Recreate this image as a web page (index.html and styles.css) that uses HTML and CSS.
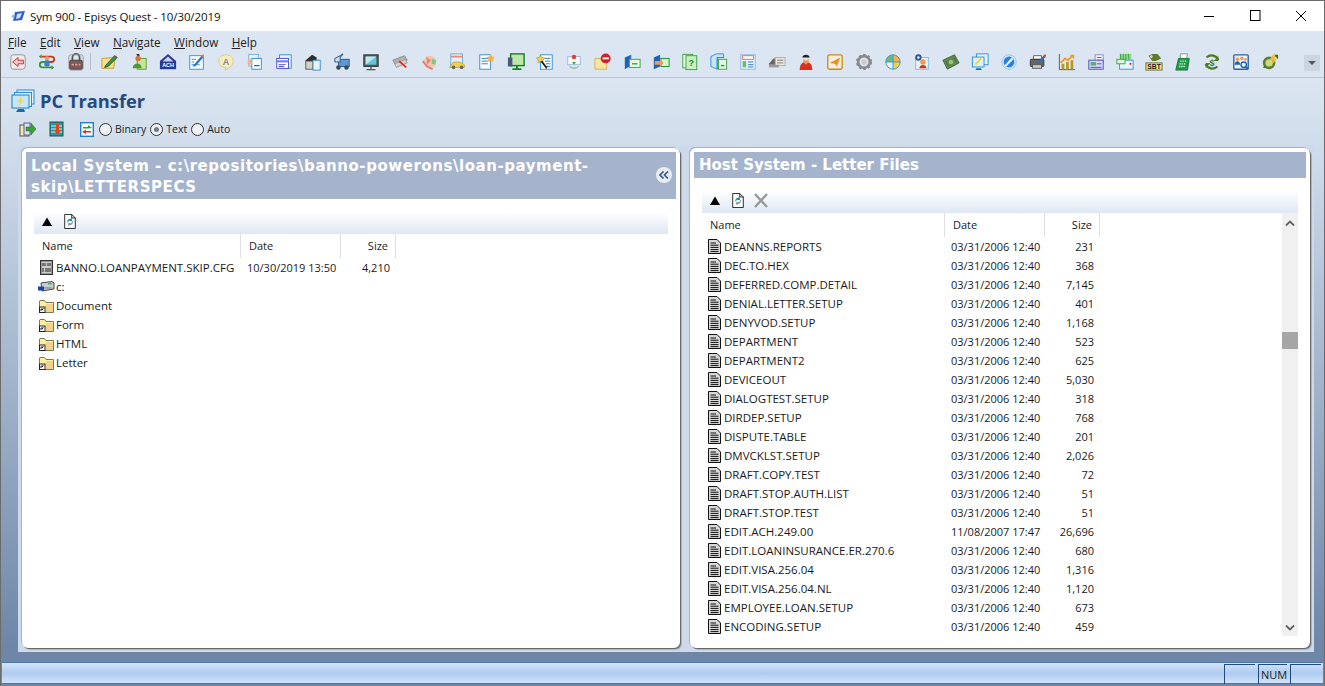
FILE: index.html
```html
<!DOCTYPE html>
<html lang="en">
<head>
<meta charset="utf-8">
<title>Sym 900 - Episys Quest - 10/30/2019</title>
<link rel="stylesheet" href="styles.css">
</head>
<body>
<svg class="defs" width="0" height="0" aria-hidden="true">
  <symbol id="doc" viewBox="0 0 13 15"><path d="M.5.5H9L12.5 4V14.5H.5Z" fill="#d8d8d8" stroke="#111"/><path d="M2.5 4H8M2.5 6.2H10.5M2.5 8.4H10.5M2.5 10.6H10.5M2.5 12.6H10.5" stroke="#111"/></symbol>
  <symbol id="cfg" viewBox="0 0 13 15"><rect x=".5" y=".5" width="12" height="14" fill="#999" stroke="#333"/><rect x="2" y="2" width="9" height="11" fill="#ccc"/><path d="M3 3v3M5 3v3M8 3v3M10 3v3M3 8v4M6 8v4M8 8v4M10 8v4" stroke="#222"/></symbol>
  <symbol id="folder" viewBox="0 0 15 15"><path d="M.5 3V14.5H14.5V4.5H7L5.5 2.5H1Z" fill="#fbf0a0" stroke="#7a7a52"/><rect x="7" y="6" width="7" height="8" fill="#f2d28e"/><rect x=".5" y="9" width="5.5" height="5.5" fill="#fff" stroke="#222"/><path d="M2 13V11H4M3 12L4.5 10.5" stroke="#222" fill="none"/></symbol>
  <symbol id="drive" viewBox="0 0 17 13"><path d="M3 3L14 1.500L16 3V9L4 11Z" fill="#c8ced4" stroke="#444"/><rect x="10" y="3" width="4" height="1.500" fill="#2fc04a"/><rect x="0" y="6.500" width="6" height="4" fill="#1844a8"/><path d="M6 8H14" stroke="#777"/></symbol>
  <symbol id="up" viewBox="0 0 12 10"><path d="M6 .5L11 9H1Z" fill="#000"/></symbol>
  <symbol id="refresh" viewBox="0 0 13 17"><path d="M.5.500H8.500L12.500 4.500V16.500H.5Z" fill="#fff" stroke="#111"/><path d="M8.500.500V4.500H12.500" fill="none" stroke="#111"/><path d="M4 9.500A3 3 0 0 1 8.500 6.500M8 4.800V7.300H5.800" fill="none" stroke="#0e8f92" stroke-width="1.300"/><path d="M9 8A3 3 0 0 1 4.500 11.500M5 13.300V10.800H7.200" fill="none" stroke="#8a9a9c" stroke-width="1.300"/></symbol>
  <symbol id="mon" viewBox="0 0 24 24"><rect x="6" y="1" width="17" height="14" fill="#dff0fb" stroke="#2a8bd0"/><rect x="3.500" y="3.500" width="17" height="14" fill="#e6f4fc" stroke="#2a8bd0"/><rect x="1" y="6" width="17" height="13" fill="#c7e8fa" stroke="#1a7cc4"/><path d="M11 7L6 13H9L7 18L13 11.500H10Z" fill="#f2d54a"/><path d="M7 20H13L14 23H5Z" fill="#0f6fb8"/></symbol>
</svg>
<div class="window">
  <header class="titlebar">
    <svg class="app-icon" width="16" height="12" viewBox="0 0 16 12"><path d="M4 2L14 1L11 10L2 11Z" fill="#2f5fc4"/><path d="M6 4L11 3L9 8L5 9Z" fill="#cfe0fa"/><path d="M0 6L4 4L3 9Z" fill="#9db8e8"/></svg>
    <span class="title-text">Sym 900 - Episys Quest - 10/30/2019</span>
    <div class="winctl">
      <span class="winbtn"><svg width="12" height="12" viewBox="0 0 12 12"><path d="M1 6.500H11" stroke="#000"/></svg></span>
      <span class="winbtn"><svg width="12" height="12" viewBox="0 0 12 12"><rect x="1.500" y=".5" width="9.500" height="10" fill="none" stroke="#000"/></svg></span>
      <span class="winbtn"><svg width="12" height="12" viewBox="0 0 12 12"><path d="M1 1L11 11M11 1L1 11" stroke="#000"/></svg></span>
    </div>
  </header>
  <nav class="menubar">
    <span class="menu"><u>F</u>ile</span>
    <span class="menu"><u>E</u>dit</span>
    <span class="menu"><u>V</u>iew</span>
    <span class="menu"><u>N</u>avigate</span>
    <span class="menu"><u>W</u>indow</span>
    <span class="menu"><u>H</u>elp</span>
  </nav>
  <div class="toolbar">
    <span class="tb"><svg viewBox="0 0 20 20"><rect x="2" y="2" width="16" height="16" rx="3" fill="#f1ecec" stroke="#8d8d8d"/><path d="M4 10L10 5V8H16V12H10V15Z" fill="#f4c6c6" stroke="#d3232e"/></svg></span>
    <span class="tb"><svg viewBox="0 0 20 20"><path d="M4 4H15A3 3 0 0 1 15 10H10" fill="none" stroke="#c53a1e" stroke-width="2"/><path d="M16 16H5A3 3 0 0 1 5 10H9" fill="none" stroke="#2f9b3a" stroke-width="2"/><circle cx="10" cy="6" r="2.500" fill="#e8a056"/><rect x="7" y="8" width="6" height="7" rx="2" fill="#3f7fc4"/><path d="M4 1.500L1 4L4 6.500ZM15 13.500L18 16L15 18.500Z" fill="#2f9b3a"/></svg></span>
    <span class="tb"><svg viewBox="0 0 20 20"><path d="M6 9V5A4 4 0 0 1 14 5V9" fill="none" stroke="#555" stroke-width="2"/><rect x="2" y="2" width="16" height="17" rx="2.500" fill="none" stroke="#9a9a9a"/><rect x="3" y="8" width="14" height="10" rx="1.500" fill="#7d5a55" stroke="#444"/><path d="M5 13H15" stroke="#ef9a9a" stroke-width="2" stroke-dasharray="2.500 1.500"/></svg></span>
    <span class="tb-sep"></span>
    <span class="tb"><svg viewBox="0 0 20 20"><path d="M1 6L16 5L14 17H1Z" fill="#f6e08c" stroke="#c79a2e"/><path d="M5 14L15 3L18 5L8 15L4 16Z" fill="#3f8f4a" stroke="#2b5f33"/><path d="M15 3L18 5" stroke="#c22"/></svg></span>
    <span class="tb"><svg viewBox="0 0 20 20"><rect x="8" y="6" width="10" height="12" fill="#c6e59a" stroke="#5a9a2e"/><circle cx="9" cy="6" r="3" fill="#c9783a"/><path d="M8 3L11 3L10 1H7Z" fill="#222"/><path d="M3 17C3 10 13 10 13 17Z" fill="#4f9a35"/></svg></span>
    <span class="tb"><svg viewBox="0 0 20 20"><path d="M10 1L19 9V18H1V9Z" fill="#2b3a8f"/><path d="M10 4L16 9.500H4Z" fill="#c7d2f5"/><text x="10" y="16" class="svgt" font-size="6" fill="#fff" text-anchor="middle">ACH</text></svg></span>
    <span class="tb"><svg viewBox="0 0 20 20"><rect x="2" y="3" width="15" height="15" fill="#fff" stroke="#2a8bd0"/><path d="M4 7H9M4 10H7M4 13H13" stroke="#2a8bd0"/><path d="M5 15L15 3L17 5L8 15Z" fill="#2a78c8"/><path d="M15 3L17 1L18 5L17 5Z" fill="#ef7a30"/></svg></span>
    <span class="tb"><svg viewBox="0 0 20 20"><path d="M10 2C15 2 18 5 18 9C18 14 13 17 9 19L10 16C5 16 2 13 2 9C2 5 5 2 10 2Z" fill="#f6eec2" stroke="#e0c872"/><text x="10" y="13" class="svgt" font-size="10" fill="#888" text-anchor="middle">A</text></svg></span>
    <span class="tb"><svg viewBox="0 0 20 20"><rect x="3" y="1.500" width="11" height="13" fill="#e8f3fc" stroke="#6fb0e8"/><rect x="6.500" y="6" width="10.500" height="12" fill="#fff" stroke="#2a8bd0"/><path d="M9 14H15" stroke="#1a6fb8" stroke-width="1.500"/><rect x="2" y="7" width="4" height="6" fill="#f1b488"/></svg></span>
    <span class="tb"><svg viewBox="0 0 20 20"><rect x="5" y="2" width="13" height="15" fill="#eaf3fc" stroke="#2a8bd0"/><rect x="2" y="6" width="13" height="11" fill="#fff" stroke="#3f46b8"/><rect x="2" y="8" width="13" height="2.500" fill="#7f86d8"/><path d="M4 13H12M4 15H10" stroke="#3f46b8"/></svg></span>
    <span class="tb"><svg viewBox="0 0 20 20"><path d="M1 9L9 2L14 5V9Z" fill="#2e2e2e"/><rect x="2" y="9" width="8" height="9" fill="#d8d2c2" stroke="#555"/><rect x="10" y="8" width="8" height="11" fill="#e6f4fc" stroke="#2a8bd0"/></svg></span>
    <span class="tb"><svg viewBox="0 0 20 20"><rect x="6" y="7" width="12" height="8" fill="#5a9ad8" stroke="#2c4f7c"/><path d="M2 6L8 3V10H2Z" fill="#c8dcf2" stroke="#2c4f7c"/><circle cx="6" cy="16" r="2.500" fill="#3a4a5a"/><circle cx="15" cy="16" r="2.500" fill="#3a4a5a"/><path d="M8 4L11 1" stroke="#2a6fb8" stroke-width="2"/></svg></span>
    <span class="tb"><svg viewBox="0 0 20 20"><rect x="2" y="2" width="16" height="13" fill="#555" stroke="#333"/><rect x="4" y="4" width="12" height="9" fill="#5fc8d8"/><path d="M4 4H16L4 13Z" fill="#bdeaf2"/><path d="M10 15V18M5 18.500H15" stroke="#555" stroke-width="1.500"/></svg></span>
    <span class="tb"><svg viewBox="0 0 20 20"><path d="M2 8L15 3L18 8L5 13Z" fill="#b8b0ac" stroke="#888"/><path d="M4 12L16 7L18 11L6 16Z" fill="#d8d0cc" stroke="#999"/><path d="M9 9L17 16" stroke="#e02a1e" stroke-width="2"/></svg></span>
    <span class="tb"><svg viewBox="0 0 20 20"><circle cx="11" cy="10" r="7" fill="#f0c8b0"/><path d="M7 4L12 8L8 13Z" fill="#e88a6a"/><path d="M13 6L18 8L17 13L13 12Z" fill="#7fc88a"/><path d="M3 9L8 15L14 18" fill="none" stroke="#e07a7a" stroke-width="2"/></svg></span>
    <span class="tb"><svg viewBox="0 0 20 20"><rect x="2" y="1" width="13" height="12" fill="#e6f0fa" stroke="#5fa8e0"/><rect x="2" y="3" width="13" height="2" fill="#e88a6a"/><path d="M1 15L5 10H12L17 13V16H1Z" fill="#f2d14a" stroke="#c9a52a"/><circle cx="5" cy="16" r="2" fill="#666"/><circle cx="14" cy="16" r="2" fill="#666"/></svg></span>
    <span class="tb"><svg viewBox="0 0 20 20"><rect x="2" y="2" width="12" height="16" fill="#fff" stroke="#2a8bd0"/><path d="M4 6H11M4 9H11M4 12H11" stroke="#2a6fb8"/><path d="M14 1L15.500 4L18.500 4.500L16.500 7L17 10L14 8.500L11 10L11.500 7L9.500 4.500L12.500 4Z" fill="#f2b050"/></svg></span>
    <span class="tb"><svg viewBox="0 0 20 20"><rect x="4" y="1" width="15" height="13" fill="#bfe8a8" stroke="#0e7a1e" stroke-width="1.500"/><rect x="1" y="5" width="5" height="10" fill="#4a5a7a"/><path d="M11 14V17M6 18H16" stroke="#0a8a1a" stroke-width="2"/></svg></span>
    <span class="tb"><svg viewBox="0 0 20 20"><rect x="5" y="2" width="13" height="16" fill="#fff" stroke="#2a8bd0"/><path d="M10 6H16M10 9H16M11 12H16M11 15H16" stroke="#2a6fb8"/><path d="M5 2L6.500 5L10 5.500L7.500 8L8 11L5 9.500L2 11L2.500 8L.5 5.500L3.500 5Z" fill="#f2d14a" stroke="#777" stroke-width=".5"/><path d="M6 9L12 17" stroke="#222" stroke-width="2"/></svg></span>
    <span class="tb"><svg viewBox="0 0 20 20"><rect x="3" y="4" width="14" height="9" fill="#f5f7fa" stroke="#9db8d8"/><circle cx="10" cy="4.500" r="2.500" fill="#e0413a"/><path d="M8 10H12L10 13Z" fill="#2f9b3a"/><path d="M5 15A6 4 0 0 0 15 15" fill="none" stroke="#5cb85c"/></svg></span>
    <span class="tb"><svg viewBox="0 0 20 20"><path d="M1 6H14V18H1Z" fill="#f8e6a0" stroke="#d0ae52"/><circle cx="13" cy="6" r="5.500" fill="#d81e2a"/><rect x="9.500" y="5" width="7" height="2" fill="#fff"/></svg></span>
    <span class="tb"><svg viewBox="0 0 20 20"><path d="M2 5L9 2V14L2 18Z" fill="#1f62b8"/><rect x="7" y="7" width="12" height="9" fill="#eaf8ea" stroke="#2fa23a"/><path d="M10 12H16" stroke="#2fa23a" stroke-width="1.500"/><path d="M9 2V7" stroke="#7ab0e8"/></svg></span>
    <span class="tb"><svg viewBox="0 0 20 20"><path d="M2 5L9 2V15L2 18Z" fill="#1f62b8"/><rect x="10" y="6" width="9" height="9" fill="#d8f4d8" stroke="#0e8a1e"/><path d="M3 9H9V7L13 11L9 15V13H3Z" fill="#ef9a50"/></svg></span>
    <span class="tb"><svg viewBox="0 0 20 20"><rect x="2" y="1.500" width="11" height="15" fill="#eaf8ea" stroke="#2fa23a"/><rect x="5.500" y="3" width="12" height="15.500" fill="#c8f0c0" stroke="#2fa23a"/><text x="11.500" y="14" class="svgt" font-size="10" fill="#2a8a2a" text-anchor="middle">?</text></svg></span>
    <span class="tb"><svg viewBox="0 0 20 20"><path d="M1 4L7 1H15V5H8V18L1 15Z" fill="#c8e4fa" stroke="#2a8bd0"/><path d="M8 5L15 5L8 5V18" fill="none" stroke="#2a8bd0"/><rect x="9.500" y="7" width="9" height="11" fill="#eaf8ea" stroke="#2fa23a"/><path d="M12 14H16" stroke="#2a8a2a" stroke-width="1.500"/></svg></span>
    <span class="tb"><svg viewBox="0 0 20 20"><rect x="2" y="2" width="16" height="16" fill="#eaf4fc" stroke="#7ab8e8"/><rect x="4" y="3" width="12" height="4" fill="#fff" stroke="#e0685a"/><rect x="4" y="9" width="4" height="7" fill="#6ac06a"/><path d="M10 10H16M10 13H16M10 15.500H16" stroke="#2a6fb8"/></svg></span>
    <span class="tb"><svg viewBox="0 0 20 20"><path d="M1 12L6 6H10V13H1Z" fill="#666"/><rect x="8" y="5" width="11" height="9" fill="#eee8d8" stroke="#aaa"/><path d="M10 8H17M10 11H17" stroke="#777"/><rect x="1" y="13" width="11" height="3" fill="#999"/></svg></span>
    <span class="tb"><svg viewBox="0 0 20 20"><path d="M3 19C3 12 6 10 10 10C14 10 17 12 17 19Z" fill="#d8321e"/><path d="M7 6A3.500 5 0 0 0 13 6V10L10 13L7 10Z" fill="#ef9a50"/><path d="M6 5C6 1 14 1 14 5Z" fill="#222"/></svg></span>
    <span class="tb"><svg viewBox="0 0 20 20"><rect x="2" y="2" width="16" height="16" rx="2" fill="#f8eede" stroke="#c88a1e" stroke-width="1.500"/><path d="M4 11L16 5L12 15L10 12Z" fill="#e0961e"/></svg></span>
    <span class="tb"><svg viewBox="0 0 20 20"><circle cx="10" cy="10" r="6.500" fill="none" stroke="#8a8a8a" stroke-width="3"/><circle cx="10" cy="10" r="7.500" fill="none" stroke="#8a8a8a" stroke-width="3" stroke-dasharray="2.500 2.400"/><circle cx="10" cy="10" r="3" fill="#ccc"/></svg></span>
    <span class="tb"><svg viewBox="0 0 20 20"><circle cx="10" cy="10" r="8" fill="#f2d14a"/><path d="M2 10A8 8 0 0 1 10 2V10Z" fill="#6ac06a"/><path d="M10 2A8 8 0 0 1 18 10H10Z" fill="#f2b050"/><path d="M2 10A8 8 0 0 0 10 18V10Z" fill="#e4f1fb"/><circle cx="10" cy="10" r="8" fill="none" stroke="#3a8ed8"/><path d="M10 2V18M2 10H18" stroke="#3a8ed8"/></svg></span>
    <span class="tb"><svg viewBox="0 0 20 20"><rect x="3" y="5" width="14" height="13" fill="#eaf4fc" stroke="#7ab8e8"/><circle cx="11" cy="10" r="3" fill="#ef9a50"/><path d="M7 17C7 12 15 12 15 17Z" fill="#d8321e"/><circle cx="6" cy="5" r="3.500" fill="#36528f"/><circle cx="6" cy="5" r="1.300" fill="#fff"/></svg></span>
    <span class="tb"><svg viewBox="0 0 20 20"><path d="M1 8L14 2L19 11L6 18Z" fill="#5f8a4a" stroke="#3e6a36"/><circle cx="10" cy="10" r="2.500" fill="#9cc08a"/><path d="M4 9L7 14M13 5L16 10" stroke="#3e6a36"/></svg></span>
    <span class="tb"><svg viewBox="0 0 20 20"><rect x="6" y="1" width="13" height="12" fill="#eaf4fc" stroke="#2a8bd0"/><rect x="1.500" y="4.500" width="13" height="11" fill="#dbf0fb" stroke="#2a8bd0"/><path d="M5 13L11 6" stroke="#f2d14a" stroke-width="2"/><path d="M6 17H11L12 19H5Z" fill="#0f6fb8"/></svg></span>
    <span class="tb"><svg viewBox="0 0 20 20"><circle cx="10" cy="10" r="8" fill="#d8ecfc" stroke="#8ac0ea"/><circle cx="10" cy="10" r="6" fill="#2a7fe0"/><path d="M5 14L13 5L15 7L7 15Z" fill="#eaf4fc"/></svg></span>
    <span class="tb"><svg viewBox="0 0 20 20"><path d="M5 3H14V7H5Z" fill="#fff" stroke="#555"/><rect x="1.500" y="7" width="15" height="8" rx="1" fill="#666" stroke="#333"/><rect x="4" y="13" width="10" height="4" fill="#ccc" stroke="#555"/><path d="M9 11L16 3L18 5L11 12Z" fill="#2a6fb8"/><path d="M16 3L18 1L19 3L18 5Z" fill="#d8321e"/></svg></span>
    <span class="tb"><svg viewBox="0 0 20 20"><path d="M1.500 1V18.500H19" fill="none" stroke="#555"/><rect x="4" y="12" width="3" height="6" fill="#b89a1e"/><rect x="9" y="10" width="3" height="8" fill="#b89a1e"/><rect x="14" y="8" width="3" height="10" fill="#b89a1e"/><path d="M3 11L8 6L11 8L16 3" fill="none" stroke="#ef9a20" stroke-width="2"/><path d="M13 2H18V7Z" fill="#ef9a20"/></svg></span>
    <span class="tb"><svg viewBox="0 0 20 20"><rect x="9" y="2" width="9" height="9" fill="#f0f0fa" stroke="#8888cc"/><path d="M11 5H16M11 8H16" stroke="#5656a8"/><rect x="2" y="8" width="16" height="10" fill="#d8d8fa" stroke="#4a4ab8"/><rect x="4" y="10" width="6" height="4" fill="#5ab45a"/><path d="M11 12H16M4 16H16" stroke="#4a4ab8"/></svg></span>
    <span class="tb"><svg viewBox="0 0 20 20"><rect x="4" y="1" width="13" height="7" fill="#8fd88f"/><path d="M5 1V7M8 1V7M11 1V7M14 1V7" stroke="#3aa03a"/><rect x="4" y="8" width="15" height="10" fill="#eaf4fc" stroke="#3a8ed8"/><rect x="1" y="7" width="9" height="5" fill="#e0f5e0" stroke="#2fa23a"/><rect x="15" y="11" width="2" height="2" fill="#e0211e"/></svg></span>
    <span class="tb"><svg viewBox="0 0 20 20"><path d="M4 3L8 1H14L18 6L12 9H8Z" fill="#5f7a2e"/><circle cx="7" cy="4" r="1.500" fill="#f0e8a0"/><rect x="1" y="11" width="18" height="8" fill="#f2e07a" stroke="#6a6a2a"/><text x="10" y="18" class="svgt" font-size="7.500" fill="#222" text-anchor="middle">SBT</text></svg></span>
    <span class="tb"><svg viewBox="0 0 20 20"><path d="M7 1H15L14 7H7Z" fill="#fff" stroke="#888"/><path d="M5 6H17L15 19H2Z" fill="#1e9a4a" stroke="#127a36"/><path d="M7 9H14M6 12H13M5.500 15H12.500" stroke="#d8f4d8" stroke-width="1.500" stroke-dasharray="1.500 1"/></svg></span>
    <span class="tb"><svg viewBox="0 0 20 20"><path d="M4 5A8 8 0 0 1 17 8M16 15A8 8 0 0 1 3 12" fill="none" stroke="#4f7a2a" stroke-width="2.500"/><path d="M17 3V9H12ZM3 17V11H8Z" fill="#4f7a2a"/><text x="10" y="14" class="svgt" font-size="10" fill="#4f7a2a" text-anchor="middle">$</text></svg></span>
    <span class="tb"><svg viewBox="0 0 20 20"><rect x="2" y="2" width="16" height="16" rx="1" fill="#eaf4fc" stroke="#2a5fa8" stroke-width="1.500"/><circle cx="6" cy="7" r="2" fill="#ef9a50"/><circle cx="11" cy="6" r="2" fill="#ef9a50"/><circle cx="15" cy="7" r="1.500" fill="#ef9a50"/><path d="M3 13C3 8 9 8 9 13Z" fill="#1f62b8"/><circle cx="13" cy="13" r="3" fill="none" stroke="#1f62b8" stroke-width="1.500"/><path d="M15 15L18 18" stroke="#1f62b8" stroke-width="2"/></svg></span>
    <span class="tb"><svg viewBox="0 0 20 20"><circle cx="9" cy="11" r="7" fill="#5f7f2e"/><circle cx="9" cy="11" r="4" fill="#cfd88a"/><path d="M2 16L4 14L6 17ZM14 2H19V7Z" fill="#2f7a2a"/><path d="M12 3L16 1L15 6L18 6L12 13L13 8H10Z" fill="#f2c02e"/></svg></span>
    <span class="tb-more"><svg width="8" height="4" viewBox="0 0 8 4"><path d="M0 0H8L4 4Z" fill="#555"/></svg></span>
  </div>
  <main class="content">
    <div class="page-head">
      <svg class="page-icon" width="24" height="24"><use href="#mon"/></svg>
      <h1 class="page-title">PC Transfer</h1>
    </div>
    <div class="page-tools">
      <svg class="tool tool-a" width="17" height="16" viewBox="0 0 17 16"><rect x="1" y="4" width="9" height="11" fill="#f5e6b0" stroke="#555"/><rect x="5" y="2" width="6" height="12" fill="#dfe2f5" stroke="#5a5a9a"/><path d="M7 6H12V2L17 8L12 14V10H7Z" fill="#3aa03a" stroke="#1f6f1f" stroke-width=".5"/></svg>
      <svg class="tool tool-b" width="16" height="16" viewBox="0 0 16 16"><rect x="1" y="1" width="13" height="14" fill="#2a9a9a" stroke="#1a4f5f"/><path d="M2 5H13M2 8H13M2 11H13" stroke="#cfeaea"/><path d="M7 3H10V9H12L8.500 14L5 9H7Z" fill="#e0451e"/></svg>
      <svg class="tool tool-c" width="14" height="15" viewBox="0 0 14 15"><rect x=".7" y=".7" width="12.600" height="13.600" fill="#fff" stroke="#1f7fd8" stroke-width="1.400"/><path d="M3 5H8V3L12 6L8 6.500H3Z" fill="#2f9b3a"/><path d="M11 9H6V7.500L2 10L6 12V10.500H11Z" fill="#d8321e"/></svg>
      <label class="radio"><span class="dot"></span>Binary</label>
      <label class="radio"><span class="dot on"></span>Text</label>
      <label class="radio"><span class="dot"></span>Auto</label>
    </div>
    <div class="stage">
      <section class="panel panel-local">
        <div class="panel-head head-local">Local System - c:\repositories\banno-powerons\loan-payment-skip\LETTERSPECS
          <span class="collapse"><svg width="10" height="8" viewBox="0 0 10 8"><path d="M4.500 .5L1 4L4.500 7.500M9 .5L5.500 4L9 7.500" fill="none" stroke="#3d5a8a" stroke-width="1.700"/></svg></span>
        </div>
        <div class="list-wrap wrap-local">
          <div class="subbar">
            <svg class="sb-up" width="12" height="10"><use href="#up"/></svg>
            <svg class="sb-ref" width="12" height="15"><use href="#refresh"/></svg>
          </div>
          <div class="row head cols-local"><span class="h-name">Name</span><span class="h-date">Date</span><span class="h-size">Size</span></div>
          <div class="row item cols-local"><span class="name"><svg class="ic" width="13" height="15"><use href="#cfg"/></svg>BANNO.LOANPAYMENT.SKIP.CFG</span><span class="date">10/30/2019 13:50</span><span class="size">4,210</span></div>
          <div class="row item cols-local"><span class="name"><svg class="ic ic-drive" width="17" height="13"><use href="#drive"/></svg>c:</span></div>
          <div class="row item cols-local"><span class="name"><svg class="ic ic-f" width="15" height="15"><use href="#folder"/></svg>Document</span></div>
          <div class="row item cols-local"><span class="name"><svg class="ic ic-f" width="15" height="15"><use href="#folder"/></svg>Form</span></div>
          <div class="row item cols-local"><span class="name"><svg class="ic ic-f" width="15" height="15"><use href="#folder"/></svg>HTML</span></div>
          <div class="row item cols-local"><span class="name"><svg class="ic ic-f" width="15" height="15"><use href="#folder"/></svg>Letter</span></div>
        </div>
      </section>
      <section class="panel panel-host">
        <div class="panel-head head-host">Host System - Letter Files</div>
        <div class="list-wrap wrap-host">
          <div class="subbar">
            <svg class="sb-up" width="12" height="10"><use href="#up"/></svg>
            <svg class="sb-ref" width="12" height="15"><use href="#refresh"/></svg>
            <svg class="sb-x" width="16" height="15" viewBox="0 0 16 15"><path d="M2 1L14 14M14 1L2 14" stroke="#999" stroke-width="2.400"/></svg>
          </div>
          <div class="host-body">
            <div class="host-list">
              <div class="row head head-h cols-host"><span class="h-name">Name</span><span class="h-date">Date</span><span class="h-size">Size</span></div>
              <div class="row item cols-host"><span class="name"><svg class="ic" width="13" height="15"><use href="#doc"/></svg>DEANNS.REPORTS</span><span class="date">03/31/2006 12:40</span><span class="size">231</span></div>
              <div class="row item cols-host"><span class="name"><svg class="ic" width="13" height="15"><use href="#doc"/></svg>DEC.TO.HEX</span><span class="date">03/31/2006 12:40</span><span class="size">368</span></div>
              <div class="row item cols-host"><span class="name"><svg class="ic" width="13" height="15"><use href="#doc"/></svg>DEFERRED.COMP.DETAIL</span><span class="date">03/31/2006 12:40</span><span class="size">7,145</span></div>
              <div class="row item cols-host"><span class="name"><svg class="ic" width="13" height="15"><use href="#doc"/></svg>DENIAL.LETTER.SETUP</span><span class="date">03/31/2006 12:40</span><span class="size">401</span></div>
              <div class="row item cols-host"><span class="name"><svg class="ic" width="13" height="15"><use href="#doc"/></svg>DENYVOD.SETUP</span><span class="date">03/31/2006 12:40</span><span class="size">1,168</span></div>
              <div class="row item cols-host"><span class="name"><svg class="ic" width="13" height="15"><use href="#doc"/></svg>DEPARTMENT</span><span class="date">03/31/2006 12:40</span><span class="size">523</span></div>
              <div class="row item cols-host"><span class="name"><svg class="ic" width="13" height="15"><use href="#doc"/></svg>DEPARTMENT2</span><span class="date">03/31/2006 12:40</span><span class="size">625</span></div>
              <div class="row item cols-host"><span class="name"><svg class="ic" width="13" height="15"><use href="#doc"/></svg>DEVICEOUT</span><span class="date">03/31/2006 12:40</span><span class="size">5,030</span></div>
              <div class="row item cols-host"><span class="name"><svg class="ic" width="13" height="15"><use href="#doc"/></svg>DIALOGTEST.SETUP</span><span class="date">03/31/2006 12:40</span><span class="size">318</span></div>
              <div class="row item cols-host"><span class="name"><svg class="ic" width="13" height="15"><use href="#doc"/></svg>DIRDEP.SETUP</span><span class="date">03/31/2006 12:40</span><span class="size">768</span></div>
              <div class="row item cols-host"><span class="name"><svg class="ic" width="13" height="15"><use href="#doc"/></svg>DISPUTE.TABLE</span><span class="date">03/31/2006 12:40</span><span class="size">201</span></div>
              <div class="row item cols-host"><span class="name"><svg class="ic" width="13" height="15"><use href="#doc"/></svg>DMVCKLST.SETUP</span><span class="date">03/31/2006 12:40</span><span class="size">2,026</span></div>
              <div class="row item cols-host"><span class="name"><svg class="ic" width="13" height="15"><use href="#doc"/></svg>DRAFT.COPY.TEST</span><span class="date">03/31/2006 12:40</span><span class="size">72</span></div>
              <div class="row item cols-host"><span class="name"><svg class="ic" width="13" height="15"><use href="#doc"/></svg>DRAFT.STOP.AUTH.LIST</span><span class="date">03/31/2006 12:40</span><span class="size">51</span></div>
              <div class="row item cols-host"><span class="name"><svg class="ic" width="13" height="15"><use href="#doc"/></svg>DRAFT.STOP.TEST</span><span class="date">03/31/2006 12:40</span><span class="size">51</span></div>
              <div class="row item cols-host"><span class="name"><svg class="ic" width="13" height="15"><use href="#doc"/></svg>EDIT.ACH.249.00</span><span class="date">11/08/2007 17:47</span><span class="size">26,696</span></div>
              <div class="row item cols-host"><span class="name"><svg class="ic" width="13" height="15"><use href="#doc"/></svg>EDIT.LOANINSURANCE.ER.270.6</span><span class="date">03/31/2006 12:40</span><span class="size">680</span></div>
              <div class="row item cols-host"><span class="name"><svg class="ic" width="13" height="15"><use href="#doc"/></svg>EDIT.VISA.256.04</span><span class="date">03/31/2006 12:40</span><span class="size">1,316</span></div>
              <div class="row item cols-host"><span class="name"><svg class="ic" width="13" height="15"><use href="#doc"/></svg>EDIT.VISA.256.04.NL</span><span class="date">03/31/2006 12:40</span><span class="size">1,120</span></div>
              <div class="row item cols-host"><span class="name"><svg class="ic" width="13" height="15"><use href="#doc"/></svg>EMPLOYEE.LOAN.SETUP</span><span class="date">03/31/2006 12:40</span><span class="size">673</span></div>
              <div class="row item cols-host"><span class="name"><svg class="ic" width="13" height="15"><use href="#doc"/></svg>ENCODING.SETUP</span><span class="date">03/31/2006 12:40</span><span class="size">459</span></div>
            </div>
            <div class="vscroll">
              <svg class="chev" width="10" height="6" viewBox="0 0 10 6"><path d="M1 5.500L5 1.500L9 5.500" fill="none" stroke="#606060" stroke-width="1.800"/></svg>
              <div class="thumb"></div>
              <svg class="chev" width="10" height="6" viewBox="0 0 10 6"><path d="M1 .5L5 4.500L9 .5" fill="none" stroke="#606060" stroke-width="1.800"/></svg>
            </div>
          </div>
        </div>
      </section>
    </div>
  </main>
  <footer class="statusbar">
    <span class="pane pane-a"></span>
    <span class="pane pane-b">NUM</span>
    <span class="pane pane-c"></span>
  </footer>
</div>
</body>
</html>
```
FILE: styles.css
```css
* { box-sizing: border-box; }
html, body { margin: 0; padding: 0; height: 100%; overflow: hidden; }
body { font-family: "Open Sans", "Noto Sans", sans-serif; font-size: 11px; color: #1a1a1a; background: #6e87a8; }
.defs { position: absolute; }
.svgt { font-family: "Liberation Sans", sans-serif; font-weight: 700; }

.window { width: 1325px; height: 686px; display: flex; flex-direction: column; border: 1px solid #6b6b6b; border-width: 1px 1px 0 1px; }

.titlebar { height: 30px; flex: none; background: #fff; display: flex; align-items: center; padding-left: 10px; }
.app-icon { flex: none; }
.title-text { font-size: 11.5px; letter-spacing: -0.1px; margin-left: 3px; color: #111; }
.winctl { margin-left: auto; display: flex; height: 100%; }
.winbtn { width: 46px; display: flex; align-items: center; justify-content: center; }

.menubar { height: 21px; flex: none; background: #dce6f2; display: flex; align-items: center; padding-left: 7px; gap: 13.4px; font-size: 11.7px; color: #222; }
.menu u { text-underline-offset: 1px; }

.toolbar { height: 26px; flex: none; background: #dce6f2; display: flex; align-items: center; padding: 0 0 6px 2px; border-bottom: 1px solid #b6c9d8; position: relative; }
.tb { flex: none; width: 29px; height: 18px; display: flex; justify-content: center; }
.tb svg { width: 18px; height: 18px; display: block; }
.tb-sep { flex: none; width: 5px; height: 17px; background: linear-gradient(#b5bfc9, #b5bfc9) no-repeat 0 0 / 1px 100%; }
.tb-more { flex: none; width: 16px; height: 16px; margin: 3px 4px 0 auto; background: #c9d5e3; display: flex; align-items: center; justify-content: center; }

.content { flex: 1; min-height: 0; display: flex; flex-direction: column; background: linear-gradient(#dce6f2 0, #d2deec 10%, #6e87a8 97%); }
.page-head { height: 42px; flex: none; display: flex; align-items: center; padding: 3px 0 0 10px; }
.page-icon { flex: none; }
.page-title { margin: 0 0 0 5px; font-size: 18.3px; line-height: 22px; font-weight: 700; color: #264a7d; }
.page-tools { height: 24px; flex: none; display: flex; align-items: center; padding-left: 18px; margin-top: -3px; }
.tool { flex: none; }
.tool-b { margin-left: 13px; }
.tool-c { margin-left: 15px; }
.radio { display: flex; align-items: center; font-size: 10.5px; color: #222; margin-right: 4px; }
.tool-c + .radio { margin-left: 5px; }
.dot { width: 13px; height: 13px; border-radius: 50%; border: 1px solid #333; background: #eef2f7; margin-right: 3px; display: flex; align-items: center; justify-content: center; }
.dot.on::after { content: ""; width: 5px; height: 5px; border-radius: 50%; background: #6f7a88; }

.stage { flex: none; height: 507px; margin: 4px 10px 10px 17px; padding: 3px 4px 4px 4px; background: #cedaea; display: flex; gap: 10px; }
.panel { background: #fff; border: 2px solid #fff; border-radius: 6px; box-shadow: -1px -1px 0 #a5b4cc, 1px 1px 0 #6a6a6a, 2px 2px 0 #a5b4cc; display: flex; flex-direction: column; padding: 2px 2px 0 2px; min-width: 0; }
.panel-local { flex: 0 0 658px; }
.panel-host { flex: 1; }
.panel-head { position: relative; background: #a5b4cc; color: #fff; font-family: "DejaVu Sans", sans-serif; font-weight: 700; font-size: 15px; line-height: 21px; padding: 4px 40px 2px 5px; flex: none; }
.head-local { height: 47px; letter-spacing: 0.55px; }
.head-host { height: 26px; padding-top: 3px; }
.collapse { position: absolute; right: 4px; top: 15px; width: 16px; height: 16px; border-radius: 50%; background: #e8edf5; display: flex; align-items: center; justify-content: center; }

.list-wrap { flex: 1; min-height: 0; display: flex; flex-direction: column; padding: 13px 8px 0 8px; }
.subbar { height: 22px; flex: none; background: linear-gradient(#fff, #dee7f3); display: flex; align-items: center; padding: 0 0 3px 7px; }
.sb-up { flex: none; }
.sb-ref { margin-left: 11px; flex: none; }
.sb-x { margin-left: 9px; flex: none; }

.row { display: grid; align-items: center; color: #1a1a1a; font-size: 11px; }
.cols-local { grid-template-columns: 207px 100px 55px; }
.cols-host { grid-template-columns: 243px 100px 55px; }
.row.head { height: 24px; }
.head span { height: 100%; display: flex; align-items: center; border-right: 1px solid #e0e0e0; padding-bottom: 2px; }
.h-name { padding-left: 8px; }
.h-date { padding-left: 8px; }
.h-size { justify-content: flex-end; padding-right: 7px; }
.item { height: 19px; }
.name { display: flex; align-items: center; padding-left: 6px; white-space: nowrap; font-size: 11.5px; }
.ic { flex: none; margin-right: 3px; }
.ic-drive { margin-left: -2px; margin-right: 1px; }
.ic-f { margin-left: -1px; margin-right: 2px; }
.date { padding-left: 6px; white-space: nowrap; }
.size { text-align: right; padding-right: 6px; }

.host-body { flex: 1; min-height: 0; display: flex; }
.host-list { flex: 1; min-width: 0; }
.head-h span { padding-bottom: 1px; }
.vscroll { flex: none; width: 16px; height: 423px; background: #f0f0f0; display: flex; flex-direction: column; align-items: center; padding: 7px 0 5px; position: relative; }
.thumb { position: absolute; left: 0; top: 119px; width: 16px; height: 17px; background: #a6a6a6; }
.chev:last-child { margin-top: auto; }

.statusbar { height: 22px; flex: none; margin: 0 1px 2px 1px; background: linear-gradient(#d3e5fb, #aecbee 50%, #d0e3fb); border: 1px solid #4f76ac; border-width: 1px 0 1px 0; display: flex; justify-content: flex-end; padding: 1px 2px 0 0; gap: 3px; }
.pane { height: 20px; border-left: 1px solid #1f4a80; border-top: 1px solid #1f4a80; font-size: 11px; line-height: 19px; padding-left: 2px; color: #222; }
.pane-a { width: 31px; }
.pane-b { width: 29px; }
.pane-c { width: 31px; }
```
